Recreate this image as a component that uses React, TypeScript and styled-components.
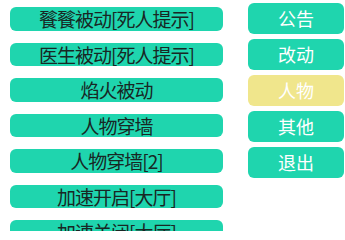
import React, { useState } from "react";
import styled, { createGlobalStyle } from "styled-components";

const GlobalStyle = createGlobalStyle`
  html, body {
    margin: 0;
    padding: 0;
    background: #ffffff;
  }
  body {
    font-family: "Noto Sans CJK SC", "Noto Sans", sans-serif;
  }
`;

const Page = styled.div`
  display: flex;
  width: 345px;
  height: 234px;
  overflow: hidden;
`;

const FeatureList = styled.div`
  display: flex;
  flex-direction: column;
  gap: 12px;
  width: 223px;
  height: 231px;
  padding: 7px 0 0 10px;
  box-sizing: border-box;
  overflow: hidden;
`;

const FeatureButton = styled.button`
  flex: none;
  height: 23.5px;
  width: 100%;
  border: 0;
  border-radius: 6px;
  background: #1fd5ae;
  color: #182724;
  font-family: inherit;
  font-size: 19px;
  letter-spacing: -1px;
  line-height: 23.5px;
  padding: 0;
  text-align: center;
  white-space: nowrap;
  cursor: pointer;
`;

const TabList = styled.div`
  display: flex;
  flex-direction: column;
  gap: 5px;
  width: 96px;
  margin-left: 25px;
  padding-top: 3px;
`;

const TabButton = styled.button<{ $active: boolean }>`
  height: 31px;
  border: 0;
  border-radius: 6px;
  background: ${(p) => (p.$active ? "#f0e68c" : "#1fd5ae")};
  color: #ffffff;
  font-family: inherit;
  font-size: 18px;
  line-height: 31px;
  padding: 0;
  text-align: center;
  cursor: pointer;
`;

const features = [
  "餮餮被动[死人提示]",
  "医生被动[死人提示]",
  "焰火被动",
  "人物穿墙",
  "人物穿墙[2]",
  "加速开启[大厅]",
  "加速关闭[大厅]",
];

const tabs = ["公告", "改动", "人物", "其他", "退出"];

export default function App() {
  const [activeTab, setActiveTab] = useState("人物");

  return (
    <Page>
      <GlobalStyle />
      <FeatureList>
        {features.map((f) => (
          <FeatureButton key={f}>{f}</FeatureButton>
        ))}
      </FeatureList>
      <TabList>
        {tabs.map((t) => (
          <TabButton key={t} $active={t === activeTab} onClick={() => setActiveTab(t)}>
            {t}
          </TabButton>
        ))}
      </TabList>
    </Page>
  );
}
